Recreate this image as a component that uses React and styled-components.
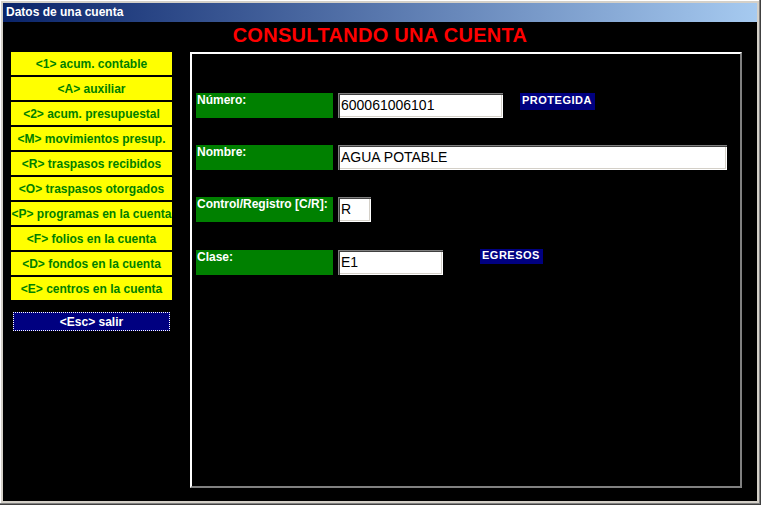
import React from "react";
import styled, { createGlobalStyle } from "styled-components";

const Global = createGlobalStyle`
  html, body { margin: 0; padding: 0; background: #d4d0c8; }
  body { font-family: "Liberation Sans", Arial, sans-serif; }
  * { box-sizing: border-box; }
`;

const Window = styled.div`
  width: 761px;
  height: 505px;
  background: #d4d0c8;
  padding: 3px 4px 4px 3px;
  display: flex;
  flex-direction: column;
  box-shadow: inset -1px -1px #404040, inset -2px -2px #808080, inset 1px 1px #ffffff;
`;

const TitleBar = styled.div`
  height: 19px;
  flex: none;
  background: linear-gradient(to right, #0a246a, #a6caf0);
  color: #ffffff;
  font: bold 12px "Liberation Sans", Arial, sans-serif;
  line-height: 19px;
  padding-left: 3px;
`;

const Body = styled.div`
  flex: 1;
  background: #000000;
  display: flex;
  flex-direction: column;
  padding: 2px 0 0 8px;
`;

const Heading = styled.h1`
  margin: 0;
  height: 23px;
  font: bold 20px "Liberation Sans", Arial, sans-serif;
  line-height: 23px;
  color: #ff0000;
  text-align: center;
  letter-spacing: 0.3px;
  padding-right: 8px;
`;

const Main = styled.div`
  display: flex;
  gap: 18px;
  margin-top: 5px;
`;

const Sidebar = styled.nav`
  width: 161px;
  display: flex;
  flex-direction: column;
  gap: 2px;
`;

const MenuButton = styled.div`
  height: 23px;
  background: #ffff00;
  color: #008000;
  font: bold 12px "Liberation Sans", Arial, sans-serif;
  display: flex;
  align-items: center;
  justify-content: center;
  white-space: nowrap;
`;

const ExitButton = styled.div`
  margin: 10px 2px 0;
  height: 19px;
  background: #000080;
  color: #ffffff;
  border: 1px dotted #ffffff;
  font: bold 12px "Liberation Sans", Arial, sans-serif;
  display: flex;
  align-items: center;
  justify-content: center;
`;

const Panel = styled.section`
  width: 552px;
  height: 436px;
  border: 2px solid;
  border-color: #ffffff #808080 #808080 #ffffff;
  padding: 39px 0 0 4px;
  display: flex;
  flex-direction: column;
`;

const Row = styled.div`
  display: flex;
  align-items: flex-start;
  height: 25px;
  margin-top: ${(p) => p.$top || 0}px;
`;

const Label = styled.div`
  width: 137px;
  height: 25px;
  background: #008000;
  color: #ffffff;
  font: bold 12px "Liberation Sans", Arial, sans-serif;
  line-height: 13px;
  padding: 1px 0 0 1px;
  white-space: nowrap;
`;

const Field = styled.div`
  margin-left: 5px;
  width: ${(p) => p.$w}px;
  height: 25px;
  background: #ffffff;
  color: #000000;
  font: 14px "Liberation Sans", Arial, sans-serif;
  line-height: 18px;
  padding: 3px 0 0 3px;
  box-shadow: inset 1px 1px #808080, inset 2px 2px #404040, inset -1px -1px #ffffff, inset -2px -2px #d4d0c8;
  white-space: nowrap;
`;

const Tag = styled.span`
  margin-left: ${(p) => p.$gap}px;
  margin-top: ${(p) => p.$dy || 0}px;
  height: ${(p) => p.$h || 17}px;
  background: #000080;
  color: #ffffff;
  font: bold 11px "Liberation Sans", Arial, sans-serif;
  line-height: ${(p) => (p.$h || 17) - 2}px;
  padding: 0 3px 0 2px;
  letter-spacing: 0.5px;
`;

const menu = [
  "<1> acum. contable",
  "<A> auxiliar",
  "<2> acum. presupuestal",
  "<M> movimientos presup.",
  "<R> traspasos recibidos",
  "<O> traspasos otorgados",
  "<P> programas en la cuenta",
  "<F> folios en la cuenta",
  "<D> fondos en la cuenta",
  "<E> centros en la cuenta",
];

export default function App() {
  return (
    <>
      <Global />
      <Window>
        <TitleBar>Datos de una cuenta</TitleBar>
        <Body>
          <Heading>CONSULTANDO UNA CUENTA</Heading>
          <Main>
            <Sidebar>
              {menu.map((m) => (
                <MenuButton key={m}>{m}</MenuButton>
              ))}
              <ExitButton>{"<Esc> salir"}</ExitButton>
            </Sidebar>
            <Panel>
              <Row>
                <Label>Número:</Label>
                <Field $w={165}>600061006101</Field>
                <Tag $gap={17}>PROTEGIDA</Tag>
              </Row>
              <Row $top={27}>
                <Label>Nombre:</Label>
                <Field $w={389}>AGUA POTABLE</Field>
              </Row>
              <Row $top={27}>
                <Label>Control/Registro [C/R]:</Label>
                <Field $w={33}>R</Field>
              </Row>
              <Row $top={28}>
                <Label>Clase:</Label>
                <Field $w={105}>E1</Field>
                <Tag $gap={37} $dy={-1} $h={15}>EGRESOS</Tag>
              </Row>
            </Panel>
          </Main>
        </Body>
      </Window>
    </>
  );
}
